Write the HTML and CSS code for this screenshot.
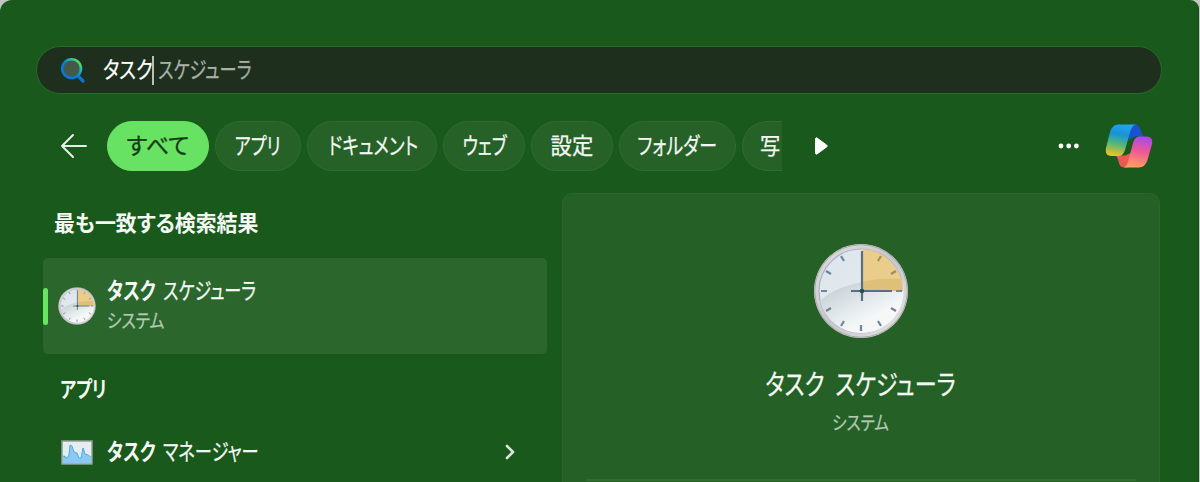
FILE: index.html
```html
<!DOCTYPE html>
<html lang="ja">
<head>
<meta charset="utf-8">
<title>検索</title>
<link rel="stylesheet" href="styles.css">
</head>
<body>
<svg class="defs" width="0" height="0" aria-hidden="true">
  <defs>
    <linearGradient id="rim" x1="0" y1="0" x2="1" y2="1"><stop offset="0" stop-color="#e2dfe2"/><stop offset=".5" stop-color="#c9c5ca"/><stop offset="1" stop-color="#e9e7e9"/></linearGradient>
    <linearGradient id="face" x1="0" y1="0" x2=".7" y2="1"><stop offset="0" stop-color="#dbe5ed"/><stop offset=".5" stop-color="#e2e9ed"/><stop offset="1" stop-color="#f8fafa"/></linearGradient>
    <linearGradient id="shade" x1="0" y1="0" x2=".8" y2="1"><stop offset="0" stop-color="#bac7ce"/><stop offset=".75" stop-color="#f6f8f8"/></linearGradient>
    <symbol id="clock" viewBox="0 0 96 96">
      <circle cx="48" cy="48" r="47" fill="url(#rim)"/>
      <circle cx="48" cy="48" r="46.3" fill="none" stroke="#a9a9ab" stroke-width="1"/>
      <circle cx="48" cy="48" r="42" fill="url(#face)" stroke="#a9b5c8" stroke-width="1.2"/>
      <path d="M7 58C22 43 52 35 89 36A42 42 0 0 1 48 90A42 42 0 0 1 7 58Z" fill="url(#shade)"/>
      <path d="M49 6A42 42 0 0 1 90 48H49Z" fill="#ebcd8b"/>
      <path d="M49 39Q68 34 89 36L90 48H49Z" fill="#dfc07b"/>
      <g stroke="#71869a" stroke-width="2.2">
        <path d="M48 82v6M8 48h6M83 48h6M28 13l3 5M13 28l5 3M13 68l5-3M28 83l3-5M68 83l-3-5M83 68l-5-3"/>
        <path stroke="#a18d5f" d="M68 13l-3 5M83 28l-5 3"/>
      </g>
      <path d="M49 8v50M38 48h41" stroke="#587083" stroke-width="2.2"/>
      <circle cx="49" cy="48" r="2.3" fill="#1c5260"/>
    </symbol>
  </defs>
</svg>
<main class="window">
  <div class="search">
    <svg class="lens" width="26" height="28" viewBox="0 0 26 28">
      <defs><linearGradient id="lensg" x1="0" y1="1" x2="1" y2="0"><stop offset=".45" stop-color="#0877d8"/><stop offset=".7" stop-color="#26b5b5"/><stop offset=".9" stop-color="#5bdd58"/></linearGradient></defs>
      <path d="M17.500 19.500l5.500 5.500" stroke="#0e74d0" stroke-width="3.200" stroke-linecap="round"/>
      <circle cx="11.600" cy="12.600" r="9.400" fill="#435a49" stroke="url(#lensg)" stroke-width="2.600"/>
    </svg>
    <span class="typed"><span class="t t-typed">タスク</span></span>
    <span class="caret"></span>
    <span class="t t-hint">スケジューラ</span>
  </div>
  <nav class="filters">
    <svg class="back" width="28" height="26" viewBox="0 0 28 26"><path d="M13 2L2 13L13 24M2 13H26" fill="none" stroke="#e8efe8" stroke-width="2" stroke-linecap="round" stroke-linejoin="round"/></svg>
    <div class="chips">
      <span class="chip active w102"><span class="t t-all">すべて</span></span>
      <span class="chip w86"><span class="t t-apps">アプリ</span></span>
      <span class="chip w130"><span class="t t-docs">ドキュメント</span></span>
      <span class="chip w82"><span class="t t-web">ウェブ</span></span>
      <span class="chip w82"><span class="t t-set">設定</span></span>
      <span class="chip w117"><span class="t t-fold">フォルダー</span></span>
      <span class="chip photo"><span class="t t-photo">写</span></span>
    </div>
    <svg class="next" width="16" height="20" viewBox="0 0 16 20"><path d="M2.500 2.500V17.500Q3 18.500 4 18L13.800 10.800Q14.800 10 13.800 9.200L4 2Q3 1.500 2.500 2.500Z" fill="#fff" stroke="#fff"/></svg>
    <svg class="dots" width="22" height="6" viewBox="0 0 22 6" fill="#fff"><circle cx="3" cy="3" r="2.400"/><circle cx="10.700" cy="3" r="2.400"/><circle cx="18.400" cy="3" r="2.400"/></svg>
    <svg class="copilot" width="48" height="44" viewBox="0 0 48 44">
      <defs>
        <linearGradient id="ca" x1=".5" y1="0" x2=".3" y2="1"><stop offset="0" stop-color="#21a2f2"/><stop offset=".3" stop-color="#1793d6"/><stop offset=".6" stop-color="#4eb481"/><stop offset="1" stop-color="#f1c51d"/></linearGradient>
        <linearGradient id="cb" x1=".6" y1="0" x2=".4" y2="1"><stop offset="0" stop-color="#a64be8"/><stop offset=".45" stop-color="#ed5797"/><stop offset="1" stop-color="#ffa05d"/></linearGradient>
      </defs>
      <path d="M26 .5H30Q34 .5 35.500 5L37 10Q38 12 40 12.500H31Q27 13 23.500 17Z" fill="#1b50cf"/>
      <path d="M10 31.500H20L26 29L23 43.500H20Q15 43.500 14 39L13 35.500Q12.500 32.500 10 31.500Z" fill="#e95a55"/>
      <path d="M13 .5H31Q27 1.500 25.500 7L20 26Q18 32 14 32H7Q-.5 32 1 24L5 8Q7.500 .5 13 .5Z" fill="url(#ca)"/>
      <path d="M34 12.500H41Q48.500 12.500 47 20L42.500 36Q40 43.500 34 43.500H19Q22 42 23 38L28 19Q30 12.500 34 12.500Z" fill="url(#cb)"/>
    </svg>
  </nav>
  <div class="content">
    <section class="results">
      <h2 class="heading best"><span class="t t-best">最も一致する検索結果</span></h2>
      <div class="result selected">
        <span class="marker"></span>
        <svg class="mini" width="38" height="38"><use href="#clock"/></svg>
        <div class="copy">
          <div class="name"><span class="name-bold"><span class="t t-bold">タスク</span></span><span class="t t-name">スケジューラ</span></div>
          <div class="kind"><span class="t t-kind">システム</span></div>
        </div>
      </div>
      <h2 class="heading apps"><span class="t t-group">アプリ</span></h2>
      <div class="result manager">
        <svg width="32" height="25" viewBox="0 0 32 25"><path d="M1 1H31V24H1Z" fill="#e5edf0" stroke="#8f9f98" stroke-width="1.500"/><path d="M2 23V16L4 15.500L6 18L8 15L9 5L11 6L13 12L16 13L18 18H20L22 8H23L24 14L27 15L30 18V23Z" fill="#8ac9f3"/><path d="M2 16L6 18L8 15L9 5L11 6L13 12L16 13L18 18H20L22 8L24 14L27 15L30 17" fill="none" stroke="#55aae4" stroke-width="1"/></svg>
        <div class="name"><span class="name-bold"><span class="t t-bold">タスク</span></span><span class="t t-mgr">マネージャー</span></div>
        <svg class="chevron" width="12" height="18" viewBox="0 0 12 18"><path d="M3 3L9 9L3 15" fill="none" stroke="#dce7dc" stroke-width="2.600" stroke-linecap="round" stroke-linejoin="round"/></svg>
      </div>
    </section>
    <section class="preview">
      <svg class="big" width="96" height="96"><use href="#clock"/></svg>
      <h1 class="title"><span class="t t-title">タスク&ensp;スケジューラ</span></h1>
      <div class="sub"><span class="t t-sub">システム</span></div>
      <div class="rule"></div>
    </section>
  </div>
</main>
</body>
</html>
```
FILE: styles.css
```css
* { box-sizing: border-box; }
body { margin: 0; background: #c3c7c3; font-family: "Noto Sans CJK JP", sans-serif; color: #f4f8f4; }
.defs { position: absolute; }
svg { display: block; flex: none; }
.window { width: 1199px; height: 482px; overflow: hidden; padding: 46px 0 0; background: #19591b; border-radius: 12px 9px 0 0; border-right: 1px solid #12500f; }
.t { display: block; flex: none; white-space: nowrap; font-feature-settings: "palt"; transform-origin: 0 50%; -webkit-text-stroke: .25px currentColor; }

.search { display: flex; align-items: center; width: 1126px; height: 48px; margin-left: 36px; padding-left: 23px; border: 1px solid #286a2a; border-radius: 24px; background: #1e2f1e; font-size: 23px; line-height: 42px; }
.search .t { height: 46px; }
.typed { width: 49px; margin-left: 17px; }
.caret { width: 2px; height: 29px; margin-right: 4px; background: #b8c0b8; }
.t-typed { color: #fff; transform: scaleX(.81); }
.t-hint { color: #a8b0a8; transform: scaleX(.748); }

.filters { display: flex; align-items: center; height: 50px; margin-top: 27px; padding-left: 60px; }
.chips { display: flex; gap: 6px; width: 675px; margin-left: 19px; overflow: hidden; }
.chip { flex: none; display: flex; justify-content: center; height: 50px; border: 1px solid #2e6d30; border-radius: 25px; background: #266127; font-size: 23px; line-height: 45px; }
.chip .t { transform-origin: 50% 50%; }
.active { background: #68e262; border-color: #68e262; color: #123b12; }
.w102 { width: 102px; } .w86 { width: 86px; } .w130 { width: 130px; } .w82 { width: 82px; } .w117 { width: 117px; }
.photo { width: 40px; justify-content: flex-start; padding-left: 17px; border-right: 0; border-radius: 25px 0 0 25px; }
.chip .t-photo { transform-origin: 0 50%; }
.t-all { transform: scaleX(1); }
.t-apps { transform: scaleX(.75); }
.t-docs { padding-left: 4px; transform: scaleX(.765); }
.t-web { padding-left: 2px; transform: scaleX(.74); }
.t-set { transform: scaleX(.93); }
.t-fold { transform: scaleX(.78); }
.t-photo { transform: scaleX(.88); }
.next { margin-left: 31px; }
.dots { margin-left: 229px; }
.copilot { margin-left: 25px; }

.content { display: flex; gap: 15px; margin-top: 22px; padding-left: 43px; }
.results { width: 504px; }
.heading { margin: 0; font-size: 22px; font-weight: 500; line-height: 30px; }
.best { margin-top: 13px; padding-left: 11px; }
.t-best { transform: scaleX(.95); font-weight: 700; -webkit-text-stroke: 0; }
.result { display: flex; align-items: center; }
.selected { height: 96px; margin-top: 22px; border-radius: 5px; background: #2b672d; }
.marker { width: 5px; height: 37px; border-radius: 3px; background: #68e662; }
.mini { margin-left: 10px; }
.copy { height: 66px; margin-left: 11px; }
.name { display: flex; font-size: 23px; line-height: 32px; }
.name-bold { width: 56px; font-weight: 700; }
.t-bold { transform: scaleX(.77); -webkit-text-stroke: 0; }
.t-name { transform: scaleX(.745); }
.t-mgr { transform: scaleX(.75); }
.kind { font-size: 19px; line-height: 30px; color: #b6cbb6; }
.t-kind { transform: scaleX(.83); }
.apps { margin-top: 18px; padding-left: 17px; }
.t-group { font-weight: 700; transform: scaleX(.78); -webkit-text-stroke: 0; }
.manager { height: 40px; margin-top: 30px; padding-left: 18px; }
.manager .name { width: 397px; height: 36px; margin-left: 14px; }

.preview { display: flex; flex-direction: column; align-items: center; width: 598px; height: 300px; padding-top: 49px; border: 1px solid #286629; border-radius: 10px; background: #256126; }
.preview .t { transform-origin: 50% 50%; }
.title { margin: 24px 0 0; font-size: 28px; font-weight: 400; line-height: 40px; }
.t-title { transform: scaleX(.79); }
.sub { margin-top: 4px; font-size: 19px; line-height: 30px; color: #b4c9b4; }
.t-sub { transform: scaleX(.82); }
.rule { width: 550px; height: 2px; margin-top: 42px; background: #30702f; }
```
